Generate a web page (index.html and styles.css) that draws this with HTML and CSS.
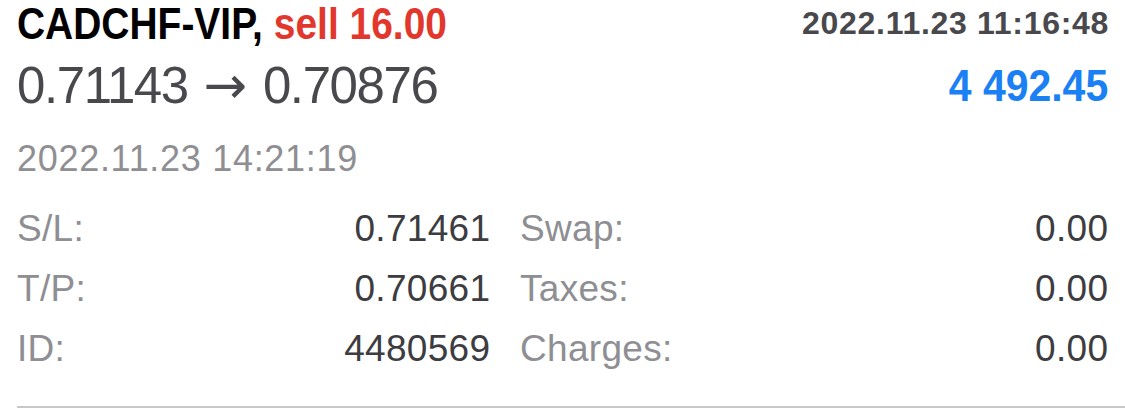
FILE: index.html
```html
<!DOCTYPE html>
<html lang="en">
<head>
  <meta charset="UTF-8" />
  <meta name="viewport" content="width=device-width, initial-scale=1.0"/>
  <title>Trade</title>
  <link rel="stylesheet" href="styles.css">
</head>
<body>

  <div class="trade">
    <div class="head">
      <div class="symbol">CADCHF-VIP, <span class="sell">sell 16.00</span></div>
      <div class="open-time">2022.11.23 11:16:48</div>
    </div>

    <div class="prices">
      <div class="price">0.71143 <span class="arrow">→</span> 0.70876</div>
      <div class="profit">4 492.45</div>
    </div>

    <div class="close-time">2022.11.23 14:21:19</div>

    <div class="details">
      <div class="cell"><span class="label">S/L:</span><span class="value">0.71461</span></div>
      <div class="cell"><span class="label">Swap:</span><span class="value">0.00</span></div>
      <div class="cell"><span class="label">T/P:</span><span class="value">0.70661</span></div>
      <div class="cell"><span class="label">Taxes:</span><span class="value">0.00</span></div>
      <div class="cell"><span class="label">ID:</span><span class="value">4480569</span></div>
      <div class="cell"><span class="label">Charges:</span><span class="value">0.00</span></div>
    </div>

    <div class="divider"></div>
  </div>

</body>
</html>
```

FILE: styles.css
```css
* {
  box-sizing: border-box;
}

body {
  margin: 0;
  background: white;
  font-family: "Liberation Sans", Arial, sans-serif;
}

.trade {
  padding-left: 17px;
}

.head,
.prices,
.close-time,
.details {
  padding-right: 17px;
}

.head {
  display: flex;
  justify-content: space-between;
  align-items: center;
  height: 46px;
  line-height: 1;
}

/* no condensed face installed, so squeeze the bold one */
.symbol {
  align-self: flex-end;
  font-weight: bold;
  font-size: 44px;
  color: #000;
  white-space: nowrap;
  transform: scaleX(0.885);
  transform-origin: left center;
}

.sell {
  color: #e2372c;
}

.open-time {
  font-weight: bold;
  font-size: 32px;
  color: #48484d;
  letter-spacing: 0.7px;
  margin-right: -1px;
  white-space: nowrap;
}

.prices {
  display: flex;
  justify-content: space-between;
  align-items: center;
  height: 78px;
  line-height: 1;
}

.price {
  font-size: 51px;
  letter-spacing: -1.4px;
  color: #48484d;
  white-space: nowrap;
}

.arrow {
  font-family: "DejaVu Sans", sans-serif;
  font-size: 52px;
  letter-spacing: 0;
  margin: 0 3px;
}

.profit {
  font-weight: bold;
  font-size: 45px;
  color: #1a80f4;
  white-space: nowrap;
  transform: scaleX(0.91);
  transform-origin: right center;
}

.close-time {
  margin-top: 12px;
  height: 46px;
  display: flex;
  align-items: center;
  font-size: 36px;
  letter-spacing: 0.7px;
  color: #8e8e93;
}

.details {
  display: grid;
  grid-template-columns: 473px 1fr;
  column-gap: 30px;
  margin-top: 17px;
}

.cell {
  display: flex;
  justify-content: space-between;
  align-items: center;
  height: 60px;
  font-size: 37px;
  letter-spacing: 0.3px;
}

.label {
  color: #8e8e93;
}

.value {
  color: #3c3c41;
  margin-right: -0.3px;
}

.divider {
  margin-top: 27px;
  border-top: 2px solid #c8c8cc;
}
```
